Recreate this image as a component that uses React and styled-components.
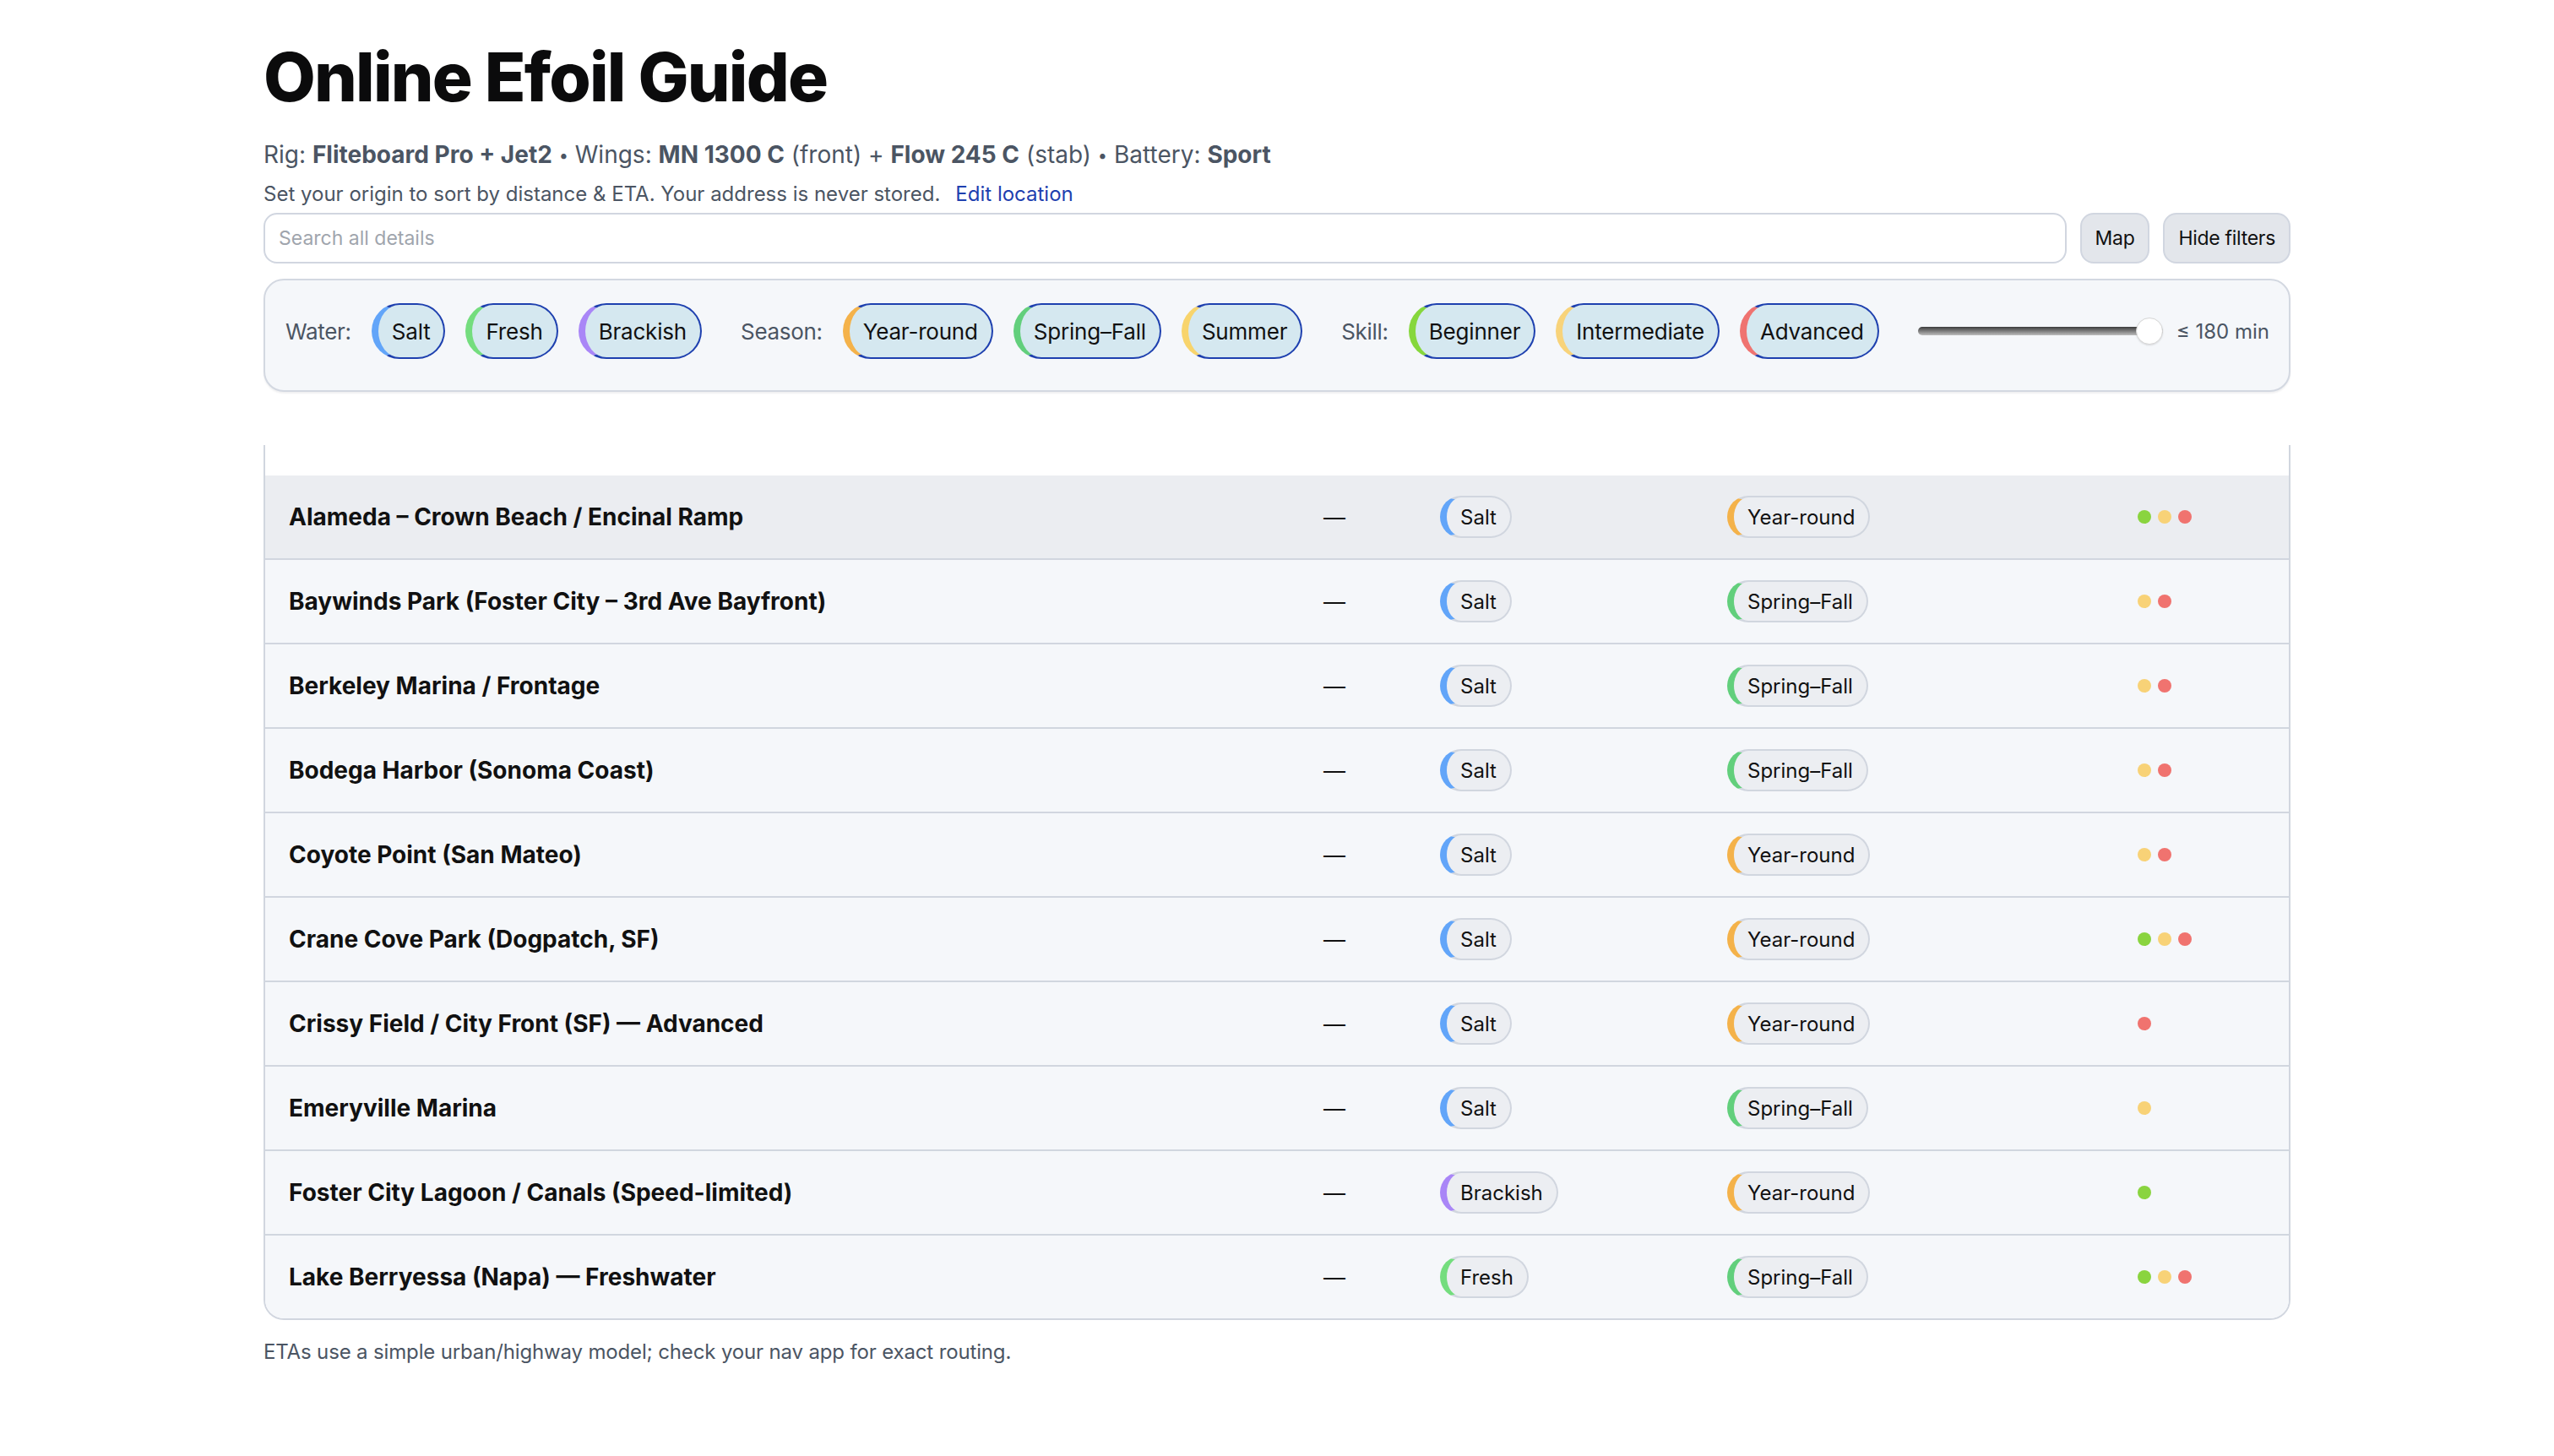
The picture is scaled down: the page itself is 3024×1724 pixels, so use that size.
import React from 'react';
import styled, { createGlobalStyle } from 'styled-components';

// sizes are in device pixels: the reference was shot on a 2x screen, so everything is doubled

const GlobalStyle = createGlobalStyle`
  html, body {
    margin: 0;
    background: #ffffff;
  }
  body {
    font-family: Inter, "Noto Sans", sans-serif;
    color: #111827;
  }
`;

const accents = {
  Salt: '#62a5f9',
  Fresh: '#74dd7e',
  Brackish: '#a986f7',
  'Year-round': '#f4b24a',
  'Spring–Fall': '#62cf7c',
  Summer: '#f8d46c',
  Beginner: '#86d73c',
  Intermediate: '#f8d37a',
  Advanced: '#ef7370',
};

const skillColors = {
  B: '#8ad43f',
  I: '#f8d277',
  A: '#f0736f',
};

const spots = [
  { name: 'Alameda – Crown Beach / Encinal Ramp', water: 'Salt', season: 'Year-round', skill: ['B', 'I', 'A'], active: true },
  { name: 'Baywinds Park (Foster City – 3rd Ave Bayfront)', water: 'Salt', season: 'Spring–Fall', skill: ['I', 'A'] },
  { name: 'Berkeley Marina / Frontage', water: 'Salt', season: 'Spring–Fall', skill: ['I', 'A'] },
  { name: 'Bodega Harbor (Sonoma Coast)', water: 'Salt', season: 'Spring–Fall', skill: ['I', 'A'] },
  { name: 'Coyote Point (San Mateo)', water: 'Salt', season: 'Year-round', skill: ['I', 'A'] },
  { name: 'Crane Cove Park (Dogpatch, SF)', water: 'Salt', season: 'Year-round', skill: ['B', 'I', 'A'] },
  { name: 'Crissy Field / City Front (SF) — Advanced', water: 'Salt', season: 'Year-round', skill: ['A'] },
  { name: 'Emeryville Marina', water: 'Salt', season: 'Spring–Fall', skill: ['I'] },
  { name: 'Foster City Lagoon / Canals (Speed-limited)', water: 'Brackish', season: 'Year-round', skill: ['B'] },
  { name: 'Lake Berryessa (Napa) — Freshwater', water: 'Fresh', season: 'Spring–Fall', skill: ['B', 'I', 'A'] },
];

const Page = styled.main`
  width: 2400px;
  margin: 0 auto;
  padding: 51px 0 80px;
`;

const Title = styled.h1`
  margin: 0;
  font-size: 80px;
  line-height: 80px;
  font-weight: 800;
  letter-spacing: -1.8px;
  color: #0b0b0c;
`;

const RigLine = styled.p`
  margin: 32px 0 0;
  font-size: 28px;
  line-height: 40px;
  color: #4b5563;

  b {
    font-weight: 700;
  }
`;

const Sep = styled.span`
  font-size: 20px;
  vertical-align: 2px;
`;

const OriginLine = styled.p`
  margin: 6px 0 0;
  font-size: 24px;
  line-height: 40px;
  color: #4b5563;
`;

const EditLink = styled.a`
  margin-left: 18px;
  color: #1e40af;
  text-decoration: none;
  cursor: pointer;
`;

const SearchRow = styled.div`
  display: flex;
  gap: 16px;
  margin-top: 2px;
`;

const SearchInput = styled.input`
  flex: 1;
  height: 60px;
  box-sizing: border-box;
  border: 2px solid #d1d6e0;
  border-radius: 16px;
  padding: 0 16px;
  font-family: Inter, sans-serif;
  font-size: 23px;
  color: #111827;
  background: #ffffff;
  outline: none;

  &::placeholder {
    color: #a0a5ad;
  }
`;

const ToolButton = styled.button`
  height: 60px;
  box-sizing: border-box;
  padding: 0 16px;
  border: 2px solid #d1d6e0;
  border-radius: 16px;
  background: #e3e6eb;
  font-family: Inter, sans-serif;
  font-size: 23px;
  letter-spacing: -0.3px;
  color: #111111;
  white-space: nowrap;
  cursor: pointer;
`;

const FilterPanel = styled.section`
  margin-top: 18px;
  height: 134px;
  box-sizing: border-box;
  padding: 27px 24px 0;
  border: 2px solid #d3d8e1;
  border-radius: 24px;
  background: #f5f7fa;
  box-shadow: 0 2px 2px rgba(15, 23, 42, 0.06);
  display: flex;
  align-items: flex-start;
  gap: 46px;
`;

const FilterGroup = styled.div`
  display: flex;
  align-items: center;
  gap: ${(p) => p.$gap || 24}px;
  height: 66px;
  flex-shrink: 0;
`;

const GroupLabel = styled.span`
  font-size: 26px;
  letter-spacing: -0.3px;
  color: #4b5563;
  white-space: nowrap;
`;

const Chip = styled.button`
  height: 66px;
  box-sizing: border-box;
  padding: 0 16px;
  border: 2px solid #1e40af;
  border-left: 8px solid ${(p) => p.$accent};
  border-radius: 999px;
  background: #d5e8f0;
  font-family: Inter, sans-serif;
  font-size: 26px;
  letter-spacing: -0.2px;
  color: #111111;
  white-space: nowrap;
  flex-shrink: 0;
  cursor: pointer;
`;

const Range = styled.input.attrs({ type: 'range' })`
  -webkit-appearance: none;
  appearance: none;
  width: 290px;
  height: 32px;
  margin: 0;
  background: transparent;
  flex-shrink: 0;

  &::-webkit-slider-runnable-track {
    height: 10px;
    border-radius: 5px;
    background: linear-gradient(#3c3c3c, #bdbdbd);
  }

  &::-webkit-slider-thumb {
    -webkit-appearance: none;
    width: 32px;
    height: 32px;
    margin-top: -11px;
    border-radius: 50%;
    border: 1px solid #d6d6d6;
    background: #ffffff;
    box-shadow: 0 1px 2px rgba(0, 0, 0, 0.12);
  }
`;

const RangeValue = styled.span`
  font-size: 24px;
  color: #4b5563;
  white-space: nowrap;
`;

const TableWrap = styled.div`
  margin-top: 63px;
  border: 2px solid #d1d6df;
  border-top: none;
  border-radius: 0 0 24px 24px;
  overflow: hidden;
`;

const columns = '1225px 138px 340px 486px 1fr';

const HeadRow = styled.div`
  height: 36px;
  background: #ffffff;
`;

const Row = styled.div`
  display: grid;
  grid-template-columns: ${columns};
  align-items: center;
  height: 100px;
  box-sizing: border-box;
  border-bottom: 2px solid #d1d6df;
  background: ${(p) => (p.$active ? '#ebedf1' : '#f5f7fa')};

  &:last-child {
    height: 98px;
    border-bottom: none;
  }
`;

const Cell = styled.div`
  padding-left: 28px;
  display: flex;
  align-items: center;
`;

const SpotName = styled(Cell)`
  font-size: 28px;
  font-weight: 700;
  color: #111111;
`;

const Distance = styled(Cell)`
  font-size: 26px;
  color: #111111;
`;

const Pill = styled.span`
  height: 50px;
  box-sizing: border-box;
  display: inline-flex;
  align-items: center;
  padding: 0 16px;
  border: 2px solid #d1d6df;
  border-left: 8px solid ${(p) => p.$accent};
  border-radius: 999px;
  background: #eceef2;
  font-size: 24px;
  color: #111111;
  white-space: nowrap;
`;

const Dots = styled(Cell)`
  gap: 8px;
`;

const Dot = styled.span`
  width: 16px;
  height: 16px;
  border-radius: 50%;
  background: ${(p) => p.$color};
`;

const Footnote = styled.p`
  margin: 21px 0 0;
  font-size: 24px;
  line-height: 34px;
  letter-spacing: -0.15px;
  color: #4b5563;
`;

const filterGroups = [
  { label: 'Water:', items: ['Salt', 'Fresh', 'Brackish'] },
  { label: 'Season:', items: ['Year-round', 'Spring–Fall', 'Summer'] },
  { label: 'Skill:', items: ['Beginner', 'Intermediate', 'Advanced'] },
];

export default function App() {
  return (
    <>
      <GlobalStyle />
      <Page>
        <Title>Online Efoil Guide</Title>
        <RigLine>
          Rig: <b>Fliteboard Pro + Jet2</b> <Sep>•</Sep> Wings: <b>MN 1300 C</b> (front) + <b>Flow 245 C</b> (stab) <Sep>•</Sep> Battery: <b>Sport</b>
        </RigLine>
        <OriginLine>
          Set your origin to sort by distance &amp; ETA. Your address is never stored.
          <EditLink>Edit location</EditLink>
        </OriginLine>

        <SearchRow>
          <SearchInput placeholder="Search all details" />
          <ToolButton>Map</ToolButton>
          <ToolButton>Hide filters</ToolButton>
        </SearchRow>

        <FilterPanel>
          {filterGroups.map((g) => (
            <FilterGroup key={g.label}>
              <GroupLabel>{g.label}</GroupLabel>
              {g.items.map((item) => (
                <Chip key={item} $accent={accents[item]}>{item}</Chip>
              ))}
            </FilterGroup>
          ))}
          <FilterGroup $gap={16}>
            <Range min={0} max={180} defaultValue={180} />
            <RangeValue>≤ 180 min</RangeValue>
          </FilterGroup>
        </FilterPanel>

        <TableWrap>
          <HeadRow />
          {spots.map((s) => (
            <Row key={s.name} $active={s.active}>
              <SpotName>{s.name}</SpotName>
              <Distance>—</Distance>
              <Cell>
                <Pill $accent={accents[s.water]}>{s.water}</Pill>
              </Cell>
              <Cell>
                <Pill $accent={accents[s.season]}>{s.season}</Pill>
              </Cell>
              <Dots>
                {s.skill.map((k) => (
                  <Dot key={k} $color={skillColors[k]} />
                ))}
              </Dots>
            </Row>
          ))}
        </TableWrap>

        <Footnote>ETAs use a simple urban/highway model; check your nav app for exact routing.</Footnote>
      </Page>
    </>
  );
}
